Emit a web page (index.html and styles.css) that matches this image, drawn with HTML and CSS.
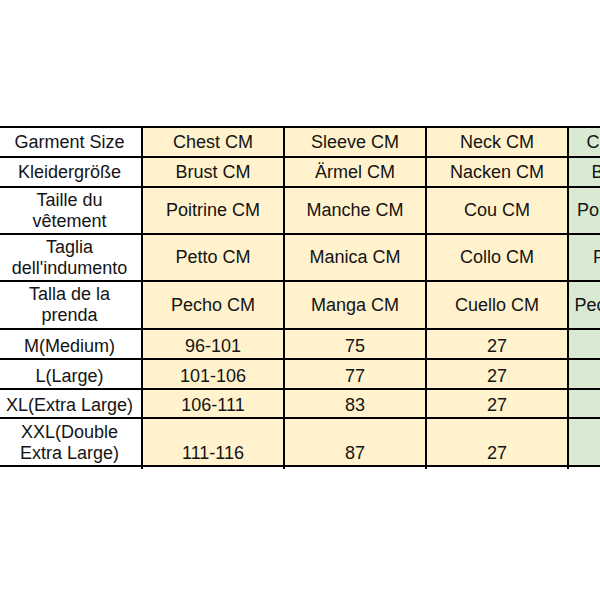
FILE: index.html
```html
<!DOCTYPE html>
<html lang="en">
<head>
<meta charset="utf-8">
<title>Size chart</title>
<link rel="stylesheet" href="styles.css">
</head>
<body>
<div class="sheet">
<table class="chart">
  <colgroup>
    <col class="c-label"><col class="c-cm"><col class="c-cm"><col class="c-cm"><col class="c-in">
  </colgroup>
  <tbody>
    <tr class="h1 head"><td class="lab">Garment Size</td><td class="y">Chest CM</td><td class="y">Sleeve CM</td><td class="y">Neck CM</td><td class="g">Chest Inches</td></tr>
    <tr class="h1 head"><td class="lab">Kleidergröße</td><td class="y">Brust CM</td><td class="y">Ärmel CM</td><td class="y">Nacken CM</td><td class="g">Brust in Zoll</td></tr>
    <tr class="h2 head"><td class="lab">Taille du<br>vêtement</td><td class="y">Poitrine CM</td><td class="y">Manche CM</td><td class="y">Cou CM</td><td class="g">Poitrine pouces</td></tr>
    <tr class="h2 head"><td class="lab">Taglia<br>dell'indumento</td><td class="y">Petto CM</td><td class="y">Manica CM</td><td class="y">Collo CM</td><td class="g">Petto pollici</td></tr>
    <tr class="h3 head"><td class="lab">Talla de la<br>prenda</td><td class="y">Pecho CM</td><td class="y">Manga CM</td><td class="y">Cuello CM</td><td class="g">Pecho pulgadas</td></tr>
    <tr class="h1 data"><td class="lab">M(Medium)</td><td class="y">96-101</td><td class="y">75</td><td class="y">27</td><td class="g">38-40</td></tr>
    <tr class="h1 data"><td class="lab">L(Large)</td><td class="y">101-106</td><td class="y">77</td><td class="y">27</td><td class="g">40-42</td></tr>
    <tr class="h4 data"><td class="lab">XL(Extra Large)</td><td class="y">106-111</td><td class="y">83</td><td class="y">27</td><td class="g">42-44</td></tr>
    <tr class="h3 data"><td class="lab">XXL(Double<br>Extra Large)</td><td class="y">111-116</td><td class="y">87</td><td class="y">27</td><td class="g">44-46</td></tr>
    <tr class="tail"><td class="lab"></td><td></td><td></td><td></td><td></td></tr>
  </tbody>
</table>
</div>
</body>
</html>
```

FILE: styles.css
```css
html, body {
  margin: 0;
  padding: 0;
  background: #ffffff;
  overflow: hidden;
}

.sheet {
  width: 600px;
  height: 600px;
  overflow: hidden;
  padding-top: 126px;
  box-sizing: border-box;
}

.chart {
  border-collapse: collapse;
  table-layout: fixed;
  width: 710px;
  font-family: "Liberation Sans", Arial, sans-serif;
  font-size: 18px;
  line-height: 21px;
  color: #141414;
}

.c-label { width: 142px; }
.c-cm { width: 142px; }
.c-in { width: 142px; }

.chart td {
  border: 2px solid #000;
  padding: 0 2px;
  text-align: center;
  white-space: nowrap;
  overflow: hidden;
}

.chart td.lab {
  border-left: none;
  background: #ffffff;
  padding-left: 0;
}

.chart td.y { background: #fff2cc; }
.chart td.g { background: #d9ead3; }

.head td { vertical-align: middle; }
.data td { vertical-align: bottom; padding-bottom: 1px; }

.h1 { height: 30px; }
.h4 { height: 29px; }
.h2 { height: 47px; }
.h3 { height: 48px; }

.tail { height: 3px; }
.chart .tail td {
  padding: 0;
  border-bottom: none;
  background: #ffffff;
  line-height: 0;
  font-size: 0;
}
```
